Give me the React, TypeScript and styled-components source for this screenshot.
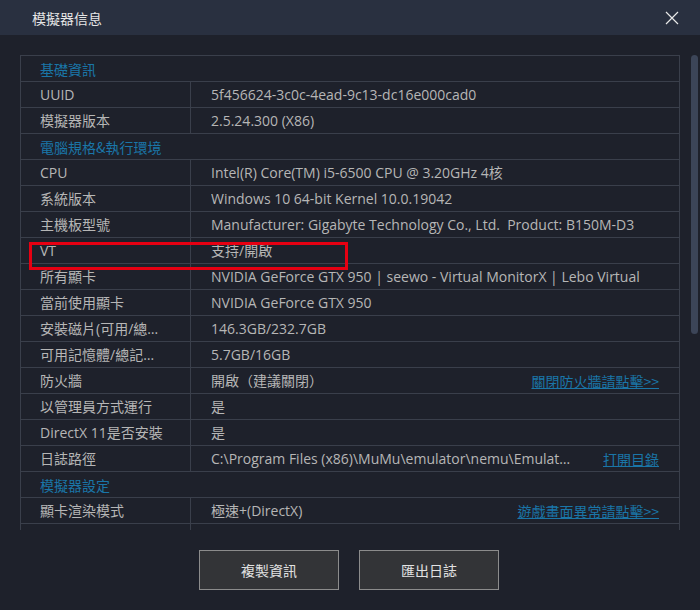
import React from "react";
import styled, { createGlobalStyle } from "styled-components";

const Global = createGlobalStyle`
  html, body { margin: 0; padding: 0; background: #1e212b; }
  body { font-family: "Open Sans", "Noto Sans CJK TC", sans-serif; }
  * { box-sizing: border-box; }
`;

const Dialog = styled.div`
  position: relative;
  width: 700px;
  height: 610px;
  background: #1e212b;
  display: flex;
  flex-direction: column;
  overflow: hidden;
`;

const Header = styled.div`
  height: 35px;
  background: #293040;
  display: flex;
  align-items: center;
  justify-content: space-between;
  padding: 0 15px 0 32px;
`;

const Title = styled.div`
  color: #e6e6e6;
  font-size: 14px;
  font-family: "Noto Sans CJK TC", sans-serif;
`;

const CloseBtn = styled.div`
  width: 14px;
  height: 14px;
  display: flex;
  margin-right: 6px;
`;

const Body = styled.div`
  display: flex;
  padding: 20px 2px 0 20px;
`;

const Viewport = styled.div`
  width: 660px;
  height: 475px;
  overflow: hidden;
  border-top: 1px solid #3a3f4b;
  border-left: 1px solid #3a3f4b;
  border-right: 1px solid #3a3f4b;
`;

const Track = styled.div`
  width: 7px;
  margin-left: 11px;
`;

const Thumb = styled.div`
  width: 7px;
  height: 279px;
  border-radius: 4px;
  background: #3c4558;
`;

const Row = styled.div`
  height: 26px;
  display: flex;
  border-bottom: 1px solid #3a3f4b;
  font-size: 14px;
  color: #b6b6b6;
`;

const Section = styled(Row)`
  align-items: center;
  padding-left: 19px;
  color: #1a76a8;
  font-family: "Noto Sans CJK TC", sans-serif;
`;

const Label = styled.div`
  width: 170px;
  flex: none;
  border-right: 1px solid #3a3f4b;
  padding: 0 24px 0 19px;
  line-height: 25px;
  white-space: nowrap;
  overflow: hidden;
  text-overflow: ellipsis;
`;

const Value = styled.div`
  flex: 1;
  min-width: 0;
  display: flex;
  align-items: center;
  padding: 0 20px;
  gap: 30px;
`;

const ValueText = styled.div<{ $ellipsis?: boolean }>`
  flex: 1;
  min-width: 0;
  height: 25px;
  line-height: 25px;
  overflow: hidden;
  ${(p) =>
    p.$ellipsis
      ? "white-space: nowrap; text-overflow: ellipsis;"
      : "white-space: normal; word-break: normal;"}
`;

const Link = styled.a`
  flex: none;
  color: #1a76a8;
  text-decoration: underline;
  font-size: 14px;
  font-family: "Noto Sans CJK TC", sans-serif;
  cursor: pointer;
`;

const Footer = styled.div`
  display: flex;
  justify-content: center;
  gap: 20px;
  padding-top: 20px;
  padding-right: 2px;
`;

const Button = styled.button`
  width: 140px;
  height: 40px;
  background: #333437;
  border: 1px solid #8c8c8c;
  color: #e2e2e2;
  font-size: 14px;
  font-family: "Noto Sans CJK TC", sans-serif;
  cursor: pointer;
`;

const Highlight = styled.div`
  position: absolute;
  left: 29px;
  top: 242px;
  width: 319px;
  height: 28px;
  border: 3px solid #e60012;
  pointer-events: none;
`;

type Item =
  | { kind: "section"; title: string }
  | { kind: "row"; label: string; value: string; link?: string; ellipsis?: boolean };

const items: Item[] = [
  { kind: "section", title: "基礎資訊" },
  { kind: "row", label: "UUID", value: "5f456624-3c0c-4ead-9c13-dc16e000cad0" },
  { kind: "row", label: "模擬器版本", value: "2.5.24.300 (X86)" },
  { kind: "section", title: "電腦規格&執行環境" },
  { kind: "row", label: "CPU", value: "Intel(R) Core(TM) i5-6500 CPU @ 3.20GHz 4核" },
  { kind: "row", label: "系統版本", value: "Windows 10 64-bit Kernel 10.0.19042" },
  {
    kind: "row",
    label: "主機板型號",
    value: "Manufacturer: Gigabyte Technology Co., Ltd.\u00a0 Product: B150M-D3",
  },
  { kind: "row", label: "VT", value: "支持/開啟" },
  {
    kind: "row",
    label: "所有顯卡",
    value:
      "NVIDIA GeForce GTX 950 | seewo - Virtual MonitorX | Lebo Virtual Display Adapter",
  },
  { kind: "row", label: "當前使用顯卡", value: "NVIDIA GeForce GTX 950" },
  { kind: "row", label: "安裝磁片(可用/總容量)", value: "146.3GB/232.7GB" },
  { kind: "row", label: "可用記憶體/總記憶體", value: "5.7GB/16GB" },
  { kind: "row", label: "防火牆", value: "開啟（建議關閉）", link: "關閉防火牆請點擊>>" },
  { kind: "row", label: "以管理員方式運行", value: "是" },
  { kind: "row", label: "DirectX 11是否安裝", value: "是" },
  {
    kind: "row",
    label: "日誌路徑",
    value: "C:\\Program Files (x86)\\MuMu\\emulator\\nemu\\EmulatorShell\\logs",
    link: "打開目錄",
    ellipsis: true,
  },
  { kind: "section", title: "模擬器設定" },
  { kind: "row", label: "顯卡渲染模式", value: "極速+(DirectX)", link: "遊戲畫面異常請點擊>>" },
  { kind: "row", label: "畫面幀率", value: "60" },
];

const CloseIcon = () => (
  <svg width="14" height="14" viewBox="0 0 14 14">
    <path d="M1 1 L13 13 M13 1 L1 13" stroke="#e8e8e8" strokeWidth="1.2" fill="none" />
  </svg>
);

export default function App() {
  return (
    <>
      <Global />
      <Dialog>
        <Header>
          <Title>模擬器信息</Title>
          <CloseBtn>
            <CloseIcon />
          </CloseBtn>
        </Header>
        <Body>
          <Viewport>
            {items.map((it, i) =>
              it.kind === "section" ? (
                <Section key={i}>{it.title}</Section>
              ) : (
                <Row key={i}>
                  <Label>{it.label}</Label>
                  <Value>
                    <ValueText $ellipsis={it.ellipsis}>{it.value}</ValueText>
                    {it.link && <Link>{it.link}</Link>}
                  </Value>
                </Row>
              )
            )}
          </Viewport>
          <Track>
            <Thumb />
          </Track>
        </Body>
        <Footer>
          <Button>複製資訊</Button>
          <Button>匯出日誌</Button>
        </Footer>
        <Highlight />
      </Dialog>
    </>
  );
}
